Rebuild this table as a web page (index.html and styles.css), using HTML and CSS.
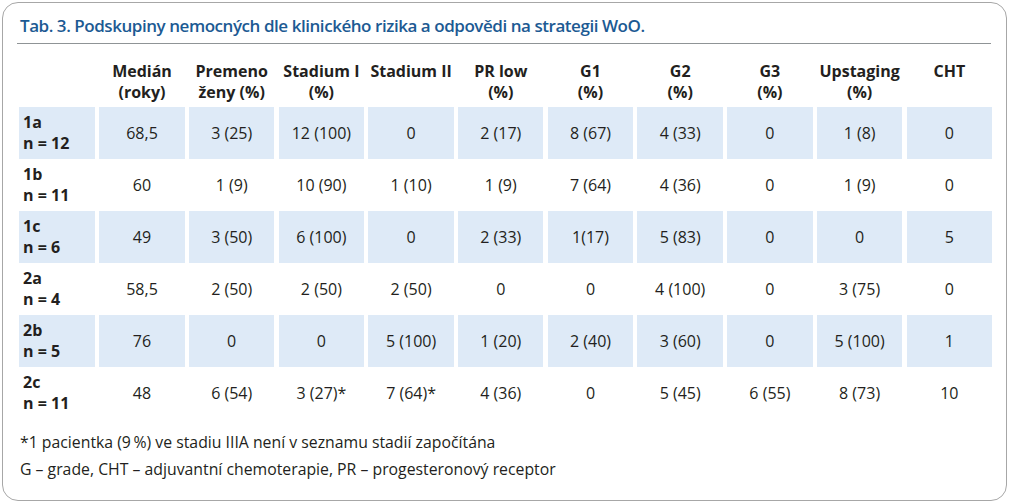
FILE: index.html
```html
<!DOCTYPE html>
<html lang="cs">
<head>
<meta charset="utf-8">
<title>Tab. 3</title>
<link rel="stylesheet" href="styles.css">
</head>
<body>
<div class="panel">
  <div class="title">Tab. 3. Podskupiny nemocných dle klinického rizika a odpovědi na strategii WoO.</div>
  <div class="table">
    <div class="row head">
      <div class="cell"></div>
      <div class="cell">Medián<br>(roky)</div>
      <div class="cell">Premeno<br>ženy (%)</div>
      <div class="cell">Stadium I<br>(%)</div>
      <div class="cell">Stadium II</div>
      <div class="cell">PR low<br>(%)</div>
      <div class="cell">G1<br>(%)</div>
      <div class="cell">G2<br>(%)</div>
      <div class="cell">G3<br>(%)</div>
      <div class="cell">Upstaging<br>(%)</div>
      <div class="cell">CHT</div>
    </div>
    <div class="row shaded">
      <div class="cell label">1a<br>n = 12</div>
      <div class="cell">68,5</div><div class="cell">3 (25)</div><div class="cell">12 (100)</div><div class="cell">0</div><div class="cell">2 (17)</div><div class="cell">8 (67)</div><div class="cell">4 (33)</div><div class="cell">0</div><div class="cell">1 (8)</div><div class="cell">0</div>
    </div>
    <div class="row">
      <div class="cell label">1b<br>n = 11</div>
      <div class="cell">60</div><div class="cell">1 (9)</div><div class="cell">10 (90)</div><div class="cell">1 (10)</div><div class="cell">1 (9)</div><div class="cell">7 (64)</div><div class="cell">4 (36)</div><div class="cell">0</div><div class="cell">1 (9)</div><div class="cell">0</div>
    </div>
    <div class="row shaded">
      <div class="cell label">1c<br>n = 6</div>
      <div class="cell">49</div><div class="cell">3 (50)</div><div class="cell">6 (100)</div><div class="cell">0</div><div class="cell">2 (33)</div><div class="cell">1(17)</div><div class="cell">5 (83)</div><div class="cell">0</div><div class="cell">0</div><div class="cell">5</div>
    </div>
    <div class="row">
      <div class="cell label">2a<br>n = 4</div>
      <div class="cell">58,5</div><div class="cell">2 (50)</div><div class="cell">2 (50)</div><div class="cell">2 (50)</div><div class="cell">0</div><div class="cell">0</div><div class="cell">4 (100)</div><div class="cell">0</div><div class="cell">3 (75)</div><div class="cell">0</div>
    </div>
    <div class="row shaded">
      <div class="cell label">2b<br>n = 5</div>
      <div class="cell">76</div><div class="cell">0</div><div class="cell">0</div><div class="cell">5 (100)</div><div class="cell">1 (20)</div><div class="cell">2 (40)</div><div class="cell">3 (60)</div><div class="cell">0</div><div class="cell">5 (100)</div><div class="cell">1</div>
    </div>
    <div class="row">
      <div class="cell label">2c<br>n = 11</div>
      <div class="cell">48</div><div class="cell">6 (54)</div><div class="cell">3 (27)*</div><div class="cell">7 (64)*</div><div class="cell">4 (36)</div><div class="cell">0</div><div class="cell">5 (45)</div><div class="cell">6 (55)</div><div class="cell">8 (73)</div><div class="cell">10</div>
    </div>
  </div>
  <div class="notes">
    <p>*1 pacientka (9&#8201;%) ve stadiu IIIA není v seznamu stadií započítána</p>
    <p>G – grade, CHT – adjuvantní chemoterapie, PR – progesteronový receptor</p>
  </div>
</div>
</body>
</html>
```
FILE: styles.css
```css
html, body {
  margin: 0;
  padding: 0;
  background: #ffffff;
}
body {
  font-family: "Open Sans", "Noto Sans", sans-serif;
  color: #231f20;
  width: 1010px;
  height: 503px;
  overflow: hidden;
}
.panel {
  box-sizing: border-box;
  margin: 2px 0 0 2px;
  width: 1005px;
  height: 499px;
  border: 1.5px solid #a7a7a7;
  border-radius: 16px;
  padding: 11px 0 0 14px;
}
.title {
  width: 974px;
  box-sizing: border-box;
  padding: 0 0 5px 3px;
  border-bottom: 1px solid #8f9496;
  color: #1c5a93;
  font-weight: 600;
  font-size: 17px;
  letter-spacing: -0.45px;
  line-height: 24px;
}
.table {
  margin: 17px 0 0 2px;
  width: 973px;
}
.row {
  display: grid;
  grid-template-columns: 76px repeat(10, 1fr);
  column-gap: 4.3px;
  height: 52px;
}
.row .cell {
  display: flex;
  align-items: center;
  justify-content: center;
  text-align: center;
  font-size: 16px;
  line-height: 21px;
}
.row.shaded .cell {
  background: #deeaf7;
}
.row .cell.label {
  justify-content: flex-start;
  text-align: left;
  padding-left: 4px;
  font-weight: 700;
}
.row.head {
  height: 46px;
}
.row.head .cell {
  align-items: flex-start;
  font-weight: 700;
  font-size: 16px;
  line-height: 21px;
}
.notes {
  margin: 10px 0 0 3px;
  font-size: 15.8px;
  line-height: 27px;
}
.notes p {
  margin: 0;
}
```
